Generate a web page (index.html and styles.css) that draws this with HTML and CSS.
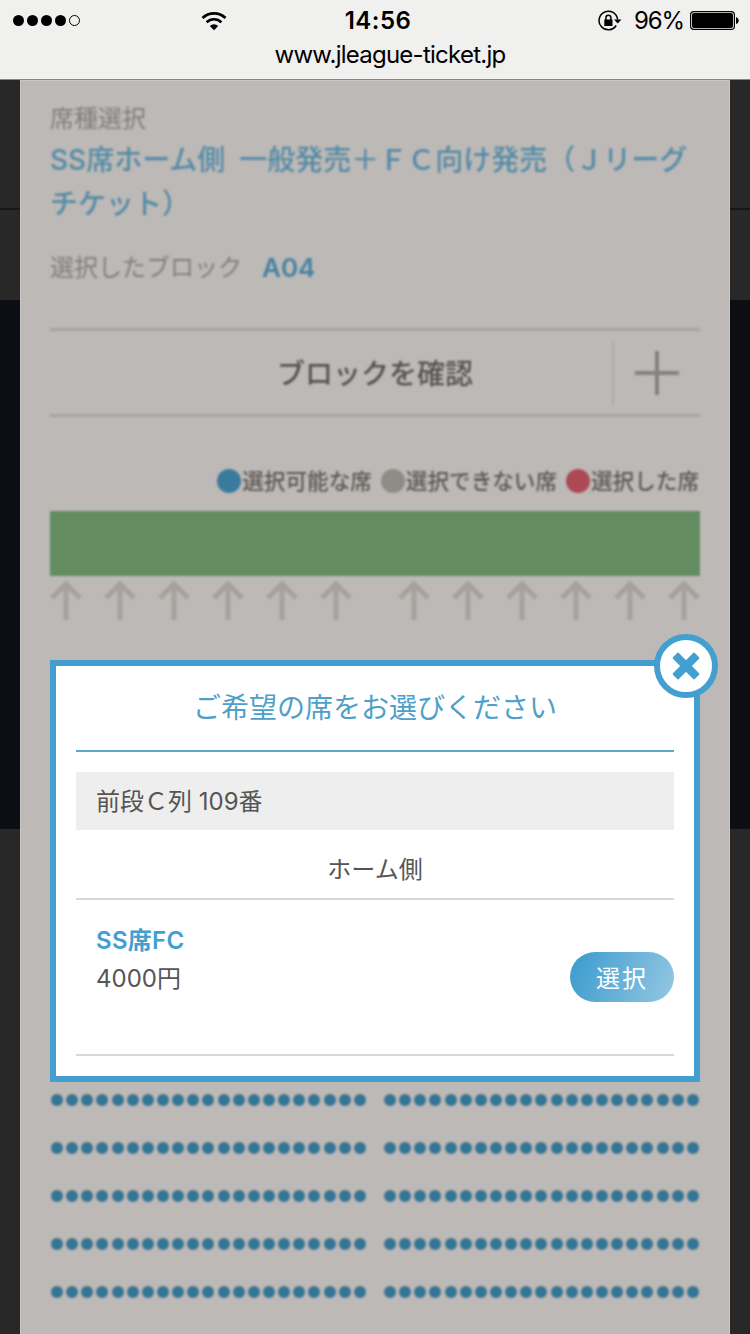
FILE: index.html
```html
<!DOCTYPE html>
<html lang="ja">
<head>
    <meta charset="UTF-8">
    <title>Jリーグチケット</title>
    <link rel="stylesheet" href="styles.css">
</head>
<body>
    <div class="browser-bar">
        <div class="status">
            <div class="signal">
                <span></span><span></span><span></span><span></span><span class="empty"></span>
            </div>
            <svg class="wifi" width="26" height="20" viewBox="0 0 26 20">
                <path d="M1.5 7 A16.5 16.5 0 0 1 24.5 7" fill="none" stroke="#000" stroke-width="2.7"/>
                <path d="M5.6 11.2 A10.6 10.6 0 0 1 20.4 11.2" fill="none" stroke="#000" stroke-width="2.6"/>
                <path d="M13 19.3 L8.8 15 A6.2 6.2 0 0 1 17.2 15 Z" fill="#000"/>
            </svg>
            <div class="time">14:56</div>
            <div class="status-right">
                <svg width="24" height="22" viewBox="0 0 24 22">
                    <path d="M18.2 15.5 A9.3 9.3 0 1 1 19.6 9.5" fill="none" stroke="#000" stroke-width="1.5"/>
                    <path d="M16 9.5 H23.5 L19.7 13.5 Z" fill="#000"/>
                    <rect x="6.3" y="9.5" width="8.2" height="6.5" fill="#000"/>
                    <path d="M7.9 10 V7.7 A2.5 2.5 0 0 1 12.9 7.7 V10" fill="none" stroke="#000" stroke-width="1.5"/>
                </svg>
                <span class="percent">96%</span>
                <svg width="49" height="19" viewBox="0 0 49 19">
                    <rect x="0.6" y="0.6" width="43.8" height="17.8" rx="3.2" fill="none" stroke="#000" stroke-width="1.2"/>
                    <rect x="2" y="2" width="41" height="15" rx="2" fill="#000"/>
                    <path d="M46 6 Q48.8 7 48.8 9.5 Q48.8 12 46 13 Z" fill="#000"/>
                </svg>
            </div>
        </div>
        <div class="url">www.jleague-ticket.jp</div>
    </div>

    <div class="page">
        <div class="panel">
            <div class="content">
                <p class="label">席種選択</p>
                <h1 class="seat-name">SS席ホーム側&ensp;一般発売＋ＦＣ向け発売（Ｊリーグチケット）</h1>
                <p class="block"><span>選択したブロック</span><b>A04</b></p>
                <div class="accordion">
                    <span>ブロックを確認</span>
                    <i class="plus"></i>
                </div>
                <ul class="legend">
                    <li class="available">選択可能な席</li>
                    <li class="disabled">選択できない席</li>
                    <li class="selected">選択した席</li>
                </ul>
                <div class="field"></div>
                <div class="arrows">
                    <div class="arrow-group"></div>
                    <div class="arrow-group"></div>
                </div>
                <div class="seats" id="seats"></div>
            </div>
        </div>

        <div class="modal">
            <button class="close">
                <svg width="28" height="28" viewBox="0 0 28 28">
                    <g fill="#439fd0" transform="rotate(45 14 14)">
                        <rect x="-1.5" y="9.8" width="31" height="8.4" rx="1.5"/>
                        <rect x="9.8" y="-1.5" width="8.4" height="31" rx="1.5"/>
                    </g>
                </svg>
            </button>
            <h2>ご希望の席をお選びください</h2>
            <div class="seat-no">前段Ｃ列 109番</div>
            <div class="side">ホーム側</div>
            <div class="ticket">
                <div>
                    <div class="ticket-name">SS席FC</div>
                    <div class="price">4000円</div>
                </div>
                <button class="select">選択</button>
            </div>
        </div>
    </div>

    <script>
        const arrow = '<svg width="32" height="40" viewBox="0 0 32 40"><path d="M16 39 V4 M2 17 L16 3 L30 17" fill="none" stroke="#a5a19d" stroke-width="5"/></svg>';
        document.querySelectorAll(".arrow-group").forEach(function (group) {
            group.innerHTML = arrow.repeat(6);
        });

        let rows = "";
        for (let i = 0; i < 5; i++) {
            const half = '<div class="half">' + "<span></span>".repeat(21) + "</div>";
            rows += '<div class="seat-row">' + half + half + "</div>";
        }
        document.getElementById("seats").innerHTML = rows;
    </script>
</body>
</html>
```
FILE: styles.css
```css
* {
    box-sizing: border-box;
}
body {
    margin: 0;
    height: 1334px;
    overflow: hidden;
    font-family: Inter, "Noto Sans CJK JP", sans-serif;
    color: #555;
}
h1, h2, p, ul {
    margin: 0;
    padding: 0;
}
.browser-bar {
    height: 80px;
    background-color: #f0f0ef;
    border-bottom: 1px solid #858583;
    color: #000;
}
.status {
    display: grid;
    grid-template-columns: 188px 52px 270px 1fr;
    align-items: center;
    height: 41px;
    padding-left: 13px;
}
.signal {
    display: flex;
    gap: 3px;
}
.signal span {
    width: 11px;
    height: 11px;
    border-radius: 50%;
    background-color: #000;
}
.signal .empty {
    background: none;
    border: 1px solid #000;
}
.time {
    text-align: center;
    font-size: 24px;
    font-weight: 600;
    letter-spacing: 0.5px;
    margin-left: -20px;
}
.status-right {
    display: flex;
    align-items: center;
    justify-content: flex-end;
    padding-right: 11px;
}
.percent {
    margin: 0 6px 0 12px;
    font-size: 24px;
    letter-spacing: -1.1px;
}
.url {
    padding-left: 30px;
    text-align: center;
    font-size: 24px;
    line-height: 28px;
    letter-spacing: -0.75px;
}
.page {
    position: relative;
    height: 1254px;
    padding: 0 20px;
    background: linear-gradient(#282828 128px, #171717 128px, #171717 130px, #282828 130px, #282828 220px, #0c0e13 220px, #0c0e13 749px, #282828 749px);
}
.panel {
    height: 1254px;
    padding: 0 29px;
    background-color: #bdb9b6;
    border: 1px solid #c9c7c4;
    border-width: 1px 1px 0;
}
/* everything behind the dialog is out of focus */
.content {
    padding-top: 20px;
    filter: blur(1.3px);
}
.label {
    font-size: 24px;
    line-height: 36px;
    color: #827e7b;
}
.seat-name {
    padding-top: 1px;
    font-size: 28px;
    font-weight: 500;
    line-height: 44px;
    color: #548ba7;
}
.block {
    display: flex;
    gap: 20px;
    margin-top: 24px;
    font-size: 24px;
    line-height: 36px;
    color: #827e7b;
}
.block b {
    font-size: 26px;
    font-weight: 600;
    color: #4582a2;
}
.accordion {
    display: flex;
    align-items: center;
    justify-content: center;
    position: relative;
    height: 89px;
    margin-top: 42px;
    border-top: 3px solid #a7a3a0;
    border-bottom: 3px solid #a7a3a0;
    font-size: 28px;
    font-weight: 500;
    color: #55524f;
}
.accordion span {
    margin-top: -2px;
}
.plus {
    position: absolute;
    right: 0;
    width: 88px;
    height: 64px;
    border-left: 2px solid #aeaaa7;
    background: linear-gradient(#85817e, #85817e) 21px center / 44px 4px no-repeat,
        linear-gradient(#85817e, #85817e) 41px center / 4px 44px no-repeat;
}
.legend {
    display: flex;
    justify-content: flex-end;
    gap: 9px;
    margin-top: 46px;
    padding-right: 1px;
    list-style: none;
    font-size: 21.6px;
    font-weight: 500;
    line-height: 36px;
    color: #5c5854;
}
.legend li {
    display: flex;
    align-items: center;
}
.legend li::before {
    content: "";
    width: 24px;
    height: 24px;
    margin-right: 1px;
    border-radius: 50%;
    background-color: #3a7b9d;
}
.legend .disabled::before {
    background-color: #8f8b87;
}
.legend .selected::before {
    background-color: #ad4855;
}
.field {
    height: 65px;
    margin-top: 12px;
    background-color: #638c60;
}
.arrows {
    display: flex;
    justify-content: space-between;
    height: 50px;
    padding-top: 5px;
}
.arrow-group {
    display: flex;
    justify-content: space-between;
    width: 302px;
}
.seats {
    margin-top: 468px;
}
.seat-row {
    display: flex;
    justify-content: space-between;
    padding: 0 1px;
    margin-bottom: 36px;
}
.half {
    display: flex;
    justify-content: space-between;
    width: 315px;
}
.half span {
    width: 12px;
    height: 12px;
    border-radius: 50%;
    background-color: #347495;
}
.modal {
    position: absolute;
    top: 580px;
    left: 50px;
    width: 650px;
    height: 422px;
    padding: 0 20px;
    border: 6px solid #439fd0;
    background-color: #fff;
}
.close {
    display: flex;
    align-items: center;
    justify-content: center;
    position: absolute;
    top: -32px;
    right: -24px;
    width: 64px;
    height: 64px;
    padding: 0;
    border: 6px solid #439fd0;
    border-radius: 50%;
    background-color: #fff;
}
.modal h2 {
    height: 86px;
    border-bottom: 2px solid #5aa7cf;
    text-align: center;
    font-size: 28px;
    font-weight: 400;
    line-height: 84px;
    color: #4f9fc9;
}
.seat-no {
    height: 58px;
    margin-top: 20px;
    padding-left: 20px;
    background-color: #eee;
    font-size: 24px;
    line-height: 60px;
}
.side {
    height: 70px;
    border-bottom: 2px solid #d8d8d8;
    text-align: center;
    font-size: 24px;
    line-height: 80px;
}
.ticket {
    display: flex;
    align-items: center;
    justify-content: space-between;
    height: 156px;
    padding-left: 20px;
    border-bottom: 2px solid #d8d8d8;
    font-size: 24px;
    line-height: 38px;
}
.ticket-name {
    font-weight: 600;
    letter-spacing: 0.3px;
    color: #439fd0;
}
.ticket > div {
    margin-top: -35px;
}
.select {
    width: 104px;
    height: 50px;
    padding: 0 0 2px;
    border: none;
    border-radius: 25px;
    background: linear-gradient(110deg, #439fd0 10%, #95c7e3);
    font-family: inherit;
    font-size: 24px;
    letter-spacing: 2px;
    color: #fff;
}
```
